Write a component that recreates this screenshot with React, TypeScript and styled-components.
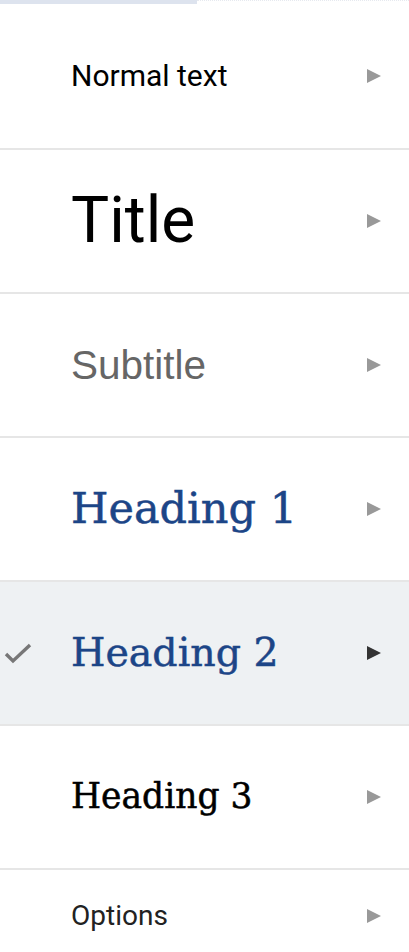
import React from "react";
import styled, { createGlobalStyle } from "styled-components";

const GlobalStyle = createGlobalStyle`
  html, body { margin: 0; padding: 0; background: #fff; }
  body { font-family: Roboto, "Liberation Sans", Arial, sans-serif; overflow: hidden; }
`;

const Menu = styled.div`
  width: 409px;
  display: flex;
  flex-direction: column;
  background: #fff;
`;

const TopStrip = styled.div`
  display: flex;
  height: 4px;
`;

const StripFill = styled.div`
  width: 197px;
  height: 4px;
  background: #dde3ee;
`;

const StripDots = styled.div`
  flex: 1;
  height: 1px;
  border-top: 1px dotted #e6e9ef;
`;

const Item = styled.div<{ $selected?: boolean; $h: number }>`
  display: flex;
  align-items: center;
  height: ${(p) => p.$h}px;
  background: ${(p) => (p.$selected ? "#eef1f3" : "#fff")};
  border-bottom: 2px solid #e6e6e6;
  box-sizing: border-box;
  &:last-child { border-bottom: none; }
`;

const CheckCol = styled.div`
  width: 71px;
  flex: none;
  display: flex;
  align-items: center;
  padding-left: 4px;
  box-sizing: border-box;
`;

type Variant = "normal" | "title" | "subtitle" | "h1" | "h2" | "h3" | "options";

const slab = `font-family: "DejaVu Serif", "Liberation Serif", serif; -webkit-text-stroke: 0.5px currentColor;`;

const styles: Record<Variant, string> = {
  normal: `font-family: Roboto, sans-serif; font-size: 30px; color: #000;`,
  title: `font-family: Roboto, sans-serif; font-size: 64px; color: #000;`,
  subtitle: `font-family: "Liberation Sans", Arial, sans-serif; font-size: 40.5px; color: #666;`,
  h1: `${slab} font-size: 43px; color: #1c4587;`,
  h2: `${slab} font-size: 39.5px; color: #1c4587;`,
  h3: `${slab} font-size: 34.5px; color: #000;`,
  options: `font-family: Roboto, sans-serif; font-size: 28px; color: #222;`,
};

const Label = styled.div<{ $v: Variant }>`
  flex: 1;
  line-height: 1.2;
  white-space: nowrap;
  ${(p) => styles[p.$v]}
`;

const Arrow = styled.div<{ $dark?: boolean }>`
  width: 0;
  height: 0;
  border-top: 7px solid transparent;
  border-bottom: 7px solid transparent;
  border-left: 14px solid ${(p) => (p.$dark ? "#333" : "#999")};
  margin-right: 28px;
  flex: none;
`;

const Check = () => (
  <svg width="28" height="24" viewBox="0 0 28 24">
    <path d="M2 13 L9 20 L26 4" fill="none" stroke="#777" strokeWidth="3.4" strokeLinejoin="miter" />
  </svg>
);

const items: { label: string; v: Variant; h: number; selected?: boolean }[] = [
  { label: "Normal text", v: "normal", h: 146 },
  { label: "Title", v: "title", h: 144 },
  { label: "Subtitle", v: "subtitle", h: 144 },
  { label: "Heading 1", v: "h1", h: 144 },
  { label: "Heading 2", v: "h2", h: 144, selected: true },
  { label: "Heading 3", v: "h3", h: 144 },
  { label: "Options", v: "options", h: 92 },
];

export default function App() {
  return (
    <>
      <GlobalStyle />
      <Menu>
        <TopStrip>
          <StripFill />
          <StripDots />
        </TopStrip>
        {items.map((it) => (
          <Item key={it.label} $selected={it.selected} $h={it.h}>
            <CheckCol>{it.selected && <Check />}</CheckCol>
            <Label $v={it.v}>{it.label}</Label>
            <Arrow $dark={it.selected} />
          </Item>
        ))}
      </Menu>
    </>
  );
}
